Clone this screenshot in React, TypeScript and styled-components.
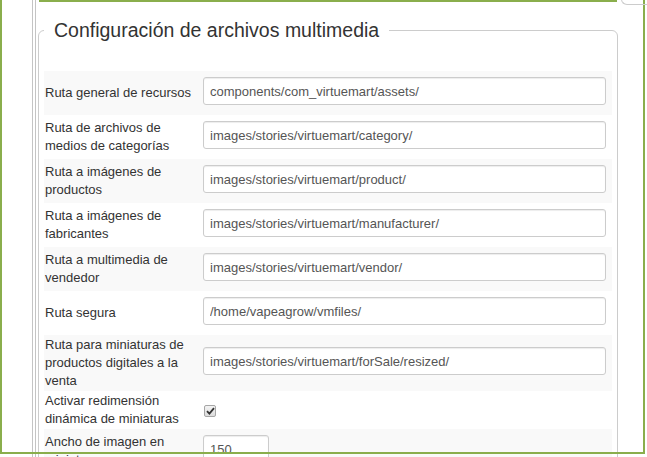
import React from "react";
import styled, { createGlobalStyle } from "styled-components";

const GlobalStyle = createGlobalStyle`
  html,
  body {
    margin: 0;
    padding: 0;
    background: #ffffff;
  }
  body {
    font-family: "Liberation Sans", Arial, sans-serif;
    font-size: 13px;
    color: #333333;
  }
`;

const Screen = styled.div`
  position: relative;
  width: 647px;
  height: 457px;
  overflow: hidden;
  background: #ffffff;
`;

const Panel = styled.div`
  height: 100%;
  margin-left: 32px;
  padding: 12px 0 0 2px;
  border-left: 4px double #c4c4c4;
`;

const Fieldset = styled.fieldset`
  box-sizing: border-box;
  width: 580px;
  margin: 0;
  padding: 0 5px;
  border: 1px solid #cccccc;
  border-radius: 6px;
`;

const Legend = styled.legend`
  margin: 0;
  padding: 0 10px;
  font-size: 19.5px;
  line-height: 37px;
  color: #333333;
`;

const Table = styled.table`
  width: 568px;
  margin-top: 22px;
  border-collapse: collapse;
  border-spacing: 0;
`;

const Row = styled.tr<{ $striped: boolean }>`
  background: ${(p) => (p.$striped ? "#f9f9f9" : "#ffffff")};
`;

const LabelCell = styled.td`
  width: 154px;
  padding: 1px 0 1px 1px;
  line-height: 18px;
  vertical-align: middle;
  color: #333333;
`;

const FieldCell = styled.td`
  padding: 1px 6px 1px 4px;
  vertical-align: middle;
`;

const TextInput = styled.input<{ $width?: number }>`
  display: block;
  box-sizing: border-box;
  width: ${(p) => (p.$width ? `${p.$width}px` : "403px")};
  height: 28px;
  margin: 5px 0 9px;
  padding: 4px 6px;
  border: 1px solid #cccccc;
  border-radius: 3px;
  box-shadow: inset 0 1px 1px rgba(0, 0, 0, 0.075);
  font-family: "Liberation Sans", Arial, sans-serif;
  font-size: 13px;
  line-height: 18px;
  color: #555555;
  background: #ffffff;
`;

const CheckBox = styled.span`
  display: flex;
  align-items: center;
  justify-content: center;
  box-sizing: border-box;
  width: 12px;
  height: 12px;
  margin: 4px 0 2px 1px;
  border: 1px solid #a6a6a6;
  border-radius: 2px;
  background: linear-gradient(#f4f4f4, #dcdcdc);
`;

const Frame = styled.div`
  position: absolute;
  left: 0;
  top: 0;
  width: 645px;
  height: 454px;
  box-sizing: border-box;
  border-left: 2px solid #8aae4c;
  border-right: 2px solid #8aae4c;
  border-bottom: 2px solid #8aae4c;
  pointer-events: none;

  &::before {
    content: "";
    position: absolute;
    left: 37px;
    top: 0;
    width: 578px;
    height: 2px;
    background: #8aae4c;
  }
`;

const TopTab = styled.div`
  position: absolute;
  left: 619px;
  top: -6px;
  width: 40px;
  height: 10px;
  border-left: 1px solid #cccccc;
  border-bottom: 1px solid #cccccc;
  border-bottom-left-radius: 6px;
`;

interface IField {
  label: string;
  value?: string;
  width?: number;
  checkbox?: boolean;
}

const fields: IField[] = [
  { label: "Ruta general de recursos", value: "components/com_virtuemart/assets/" },
  { label: "Ruta de archivos de medios de categorías", value: "images/stories/virtuemart/category/" },
  { label: "Ruta a imágenes de productos", value: "images/stories/virtuemart/product/" },
  { label: "Ruta a imágenes de fabricantes", value: "images/stories/virtuemart/manufacturer/" },
  { label: "Ruta a multimedia de vendedor", value: "images/stories/virtuemart/vendor/" },
  { label: "Ruta segura", value: "/home/vapeagrow/vmfiles/" },
  {
    label: "Ruta para miniaturas de productos digitales a la venta",
    value: "images/stories/virtuemart/forSale/resized/",
  },
  { label: "Activar redimensión dinámica de miniaturas", checkbox: true },
  { label: "Ancho de imagen en miniatura", value: "150", width: 66 },
];

const Check = () => (
  <svg width="9" height="8" viewBox="0 0 9 8">
    <path d="M1 4.2 L3.4 6.6 L8 1.2" fill="none" stroke="#333" strokeWidth="1.8" />
  </svg>
);

const App: React.FC = () => {
  return (
    <Screen>
      <GlobalStyle />
      <Panel>
        <Fieldset>
          <Legend>Configuración de archivos multimedia</Legend>
          <Table>
            <tbody>
              {fields.map((field, i) => (
                <Row key={field.label} $striped={i % 2 === 0}>
                  <LabelCell>{field.label}</LabelCell>
                  <FieldCell>
                    {field.checkbox ? (
                      <CheckBox>
                        <Check />
                      </CheckBox>
                    ) : (
                      <TextInput type="text" defaultValue={field.value} $width={field.width} />
                    )}
                  </FieldCell>
                </Row>
              ))}
            </tbody>
          </Table>
        </Fieldset>
      </Panel>
      <Frame>
        <TopTab />
      </Frame>
    </Screen>
  );
};

export default App;
